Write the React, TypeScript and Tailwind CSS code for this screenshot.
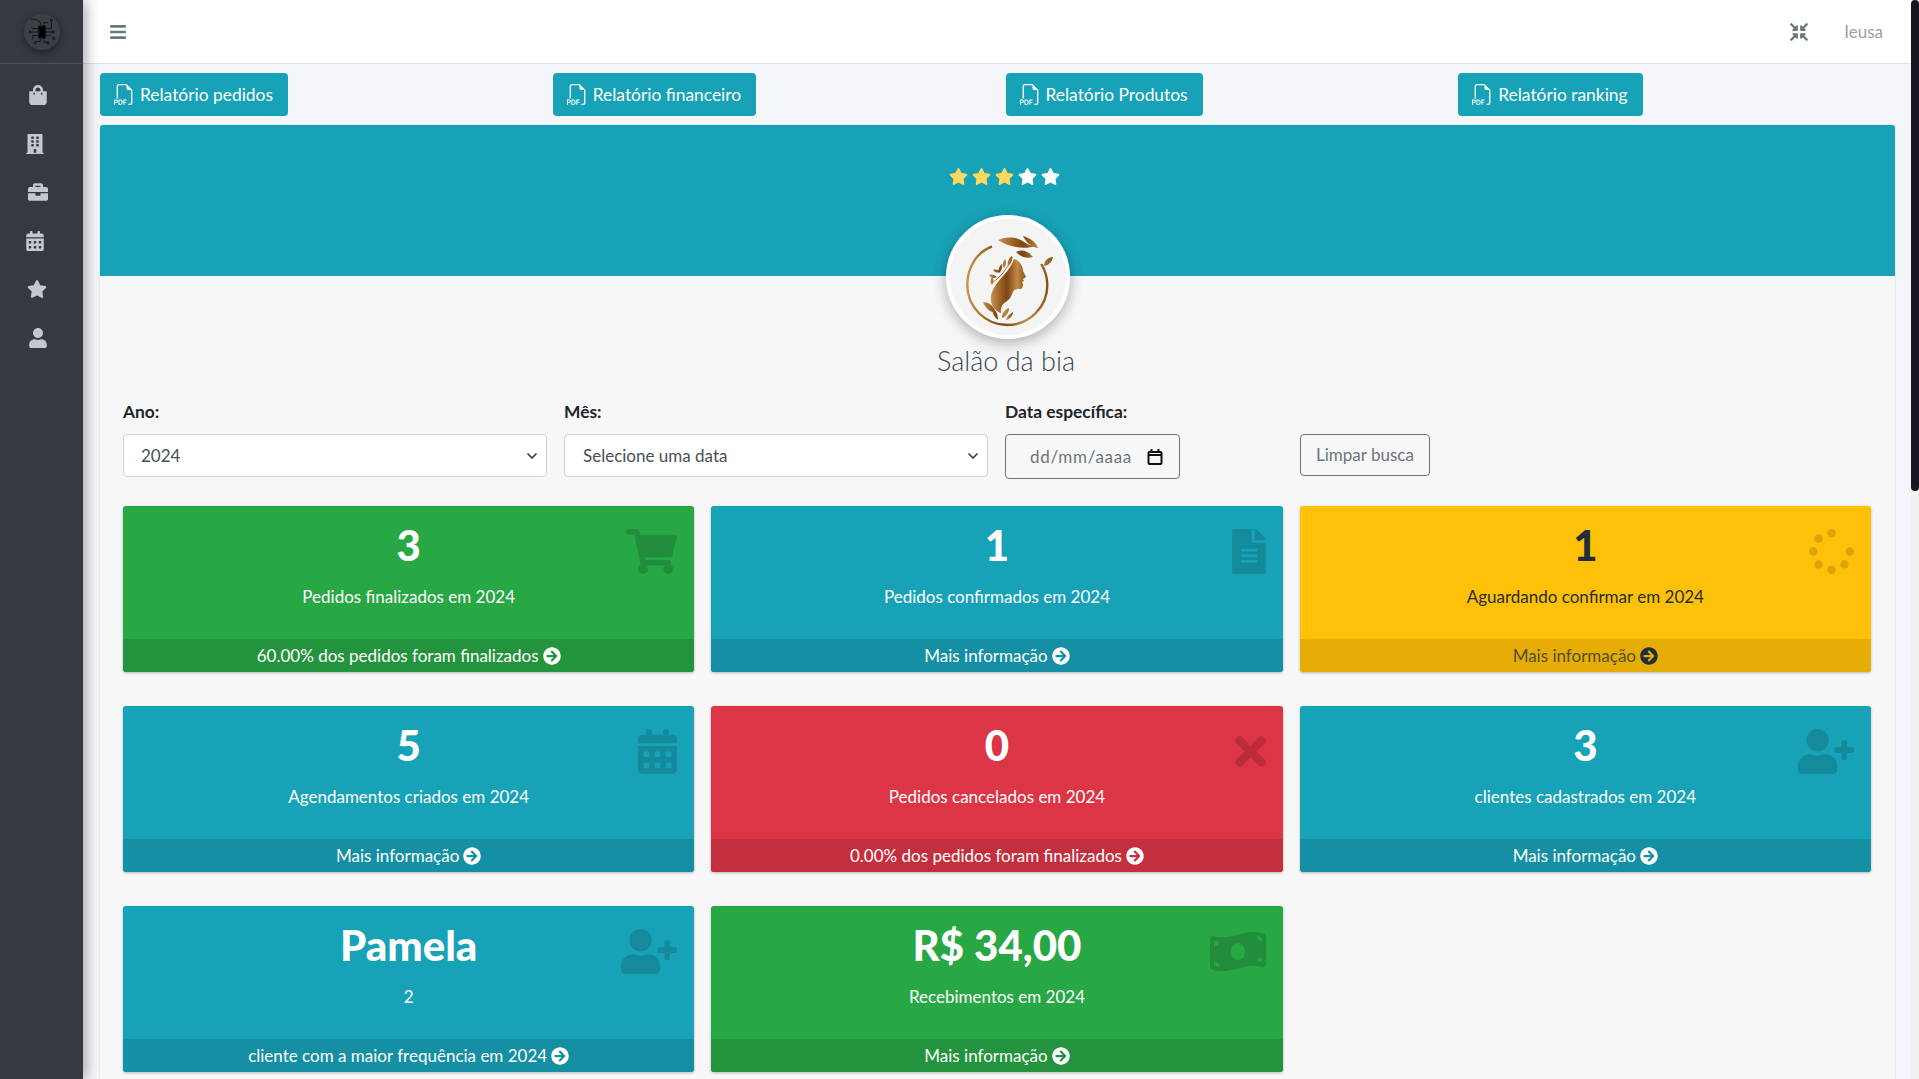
import React from "react";
import {
  FaShoppingBag,
  FaBuilding,
  FaBriefcase,
  FaCalendarAlt,
  FaStar,
  FaUser,
  FaBars,
  FaCompressArrowsAlt,
  FaShoppingCart,
  FaFileAlt,
  FaSpinner,
  FaTimes,
  FaUserPlus,
  FaMoneyBillWave,
  FaArrowCircleRight,
} from "react-icons/fa";
import { BsFiletypePdf } from "react-icons/bs";
import { ChevronDown } from "lucide-react";

const sideIcons = [
  { Icon: FaShoppingBag, cls: "ml-[-8px]" },
  { Icon: FaBuilding, cls: "ml-[-14px]" },
  { Icon: FaBriefcase, cls: "ml-[-7px]" },
  { Icon: FaCalendarAlt, cls: "ml-[-13px]" },
  { Icon: FaStar, cls: "ml-[-9px]" },
  { Icon: FaUser, cls: "ml-[-8px]" },
];

const reports = ["Relatório pedidos", "Relatório financeiro", "Relatório Produtos", "Relatório ranking"];

const teal = { body: "bg-[#17a2b8] text-white", foot: "bg-[#148fa3] text-white", text: "", icon: "text-[#148a9c]" };
const green = { body: "bg-[#28a745] text-white", foot: "bg-[#24933d] text-white", text: "", icon: "text-[#228e3b]" };
const red = { body: "bg-[#dc3545] text-white", foot: "bg-[#c32f3d] text-white", text: "", icon: "text-[#bb2d3b]" };
const yellow = { body: "bg-[#ffc107] text-[#1f2d3d]", foot: "bg-[#e5ad06] text-[#1f2d3d]", text: "opacity-75", icon: "text-[#d9a406]" };

const cards = [
  { value: "3", label: "Pedidos finalizados em 2024", foot: "60.00% dos pedidos foram finalizados", tone: green, Icon: FaShoppingCart, w: "w-[51px]" },
  { value: "1", label: "Pedidos confirmados em 2024", foot: "Mais informação", tone: teal, Icon: FaFileAlt, w: "w-[34px]" },
  { value: "1", label: "Aguardando confirmar em 2024", foot: "Mais informação", tone: yellow, Icon: FaSpinner, w: "w-[45px]" },
  { value: "5", label: "Agendamentos criados em 2024", foot: "Mais informação", tone: teal, Icon: FaCalendarAlt, w: "w-[39px]" },
  { value: "0", label: "Pedidos cancelados em 2024", foot: "0.00% dos pedidos foram finalizados", tone: red, Icon: FaTimes, w: "w-[31px]" },
  { value: "3", label: "clientes cadastrados em 2024", foot: "Mais informação", tone: teal, Icon: FaUserPlus, w: "w-[56px]" },
  { value: "Pamela", label: "2", foot: "cliente com a maior frequência em 2024", tone: teal, Icon: FaUserPlus, w: "w-[56px]" },
  { value: "R$ 34,00", label: "Recebimentos em 2024", foot: "Mais informação", tone: green, Icon: FaMoneyBillWave, w: "w-[56px]" },
];

const ChipLogo = () => (
  <svg viewBox="0 0 40 40" className="w-[34px] h-[34px]" fill="none" stroke="#111" strokeWidth="1">
    <rect x="16" y="13" width="8" height="14" fill="#000" />
    <path d="M16 16H9l-2-2M16 20H6M16 24H9v5M24 16h7V7M24 20h9M24 24h6l3 3M18 13V8l-6-3H7M22 13V9h5M18 27v4h-6M22 27v5h5" />
    <circle cx="6" cy="20" r="1.3" />
    <circle cx="33" cy="20" r="1.3" />
    <circle cx="31" cy="6" r="1.3" />
    <circle cx="12" cy="33" r="1.3" />
    <circle cx="27" cy="33" r="1.3" />
    <circle cx="34" cy="28" r="1.3" />
  </svg>
);

const SalonLogo = () => (
  <svg viewBox="4 4 116 116" className="w-[116px] h-[116px]" fill="none">
    <defs>
      <linearGradient id="gold" x1="0" y1="0" x2="1" y2="0">
        <stop offset="0" stopColor="#c8924a" />
        <stop offset="0.45" stopColor="#7d4411" />
        <stop offset="0.75" stopColor="#c08a45" />
        <stop offset="1" stopColor="#8a5218" />
      </linearGradient>
    </defs>
    {/* ring */}
    <path d="M46 31.5C31 37 21.3 52 21.3 70c0 22 18 40 40 40s40-18 40-40c0-8-2.500-15-6-21" stroke="url(#gold)" strokeWidth="2.4" />
    {/* head, neck and hair swoosh */}
    <path d="M68 44c5 1 9 7 9 12l3 6-3 2 1 2-2 1 1 2c0 3-1 5-3 5-3 0-6 0-7 3-2 4-2 6-6 9-5 3-7 7-6 12-5-2-9-6-10-12-1-9 4-16 12-25 6-6 9-12 11-17z" fill="url(#gold)" />
    {/* top leaves */}
    <path d="M52 25c10-4 20-3 26 2 5 3 8 4 12 4-12 4-28 1-38-6zM77 21c7 2 13 6 15 12-7-1-12-6-15-12zM70 37c6-3 12-1 17 5-6 2-13 0-17-5zM98 51c0-5 4-9 9-9-1 5-4 8-9 9z" fill="url(#gold)" />
    {/* sprig */}
    <path d="M47 67c7-4 15-14 19-25" stroke="url(#gold)" strokeWidth="1" />
    <path d="M66 41c1 4-1 8-4 10-1-4 1-8 4-10zM59 44c2 3 1 6-1 9-2-3-1-6 1-9zM56 49c1 3 0 6-3 9-1-3 0-7 3-9zM47 55c3-1 6 0 8 2-3 1-6 1-8-2zM43 60c3-1 6 0 8 2-3 2-6 1-8-2zM46 62c2 2 2 5 0 8-2-2-2-6 0-8z" fill="url(#gold)" />
    {/* bottom leaves */}
    <path d="M37 87c6 0 11 4 13 11-6-1-11-5-13-11zM46 93c4 2 6 6 6 12-4-3-6-7-6-12zM56 103c0-4 2-8 7-10 0 4-2 8-7 10zM60 105c1-3 3-6 7-8 0 4-3 7-7 8z" fill="url(#gold)" />
  </svg>
);

function StatCard({ card }: { card: (typeof cards)[number] }) {
  const { Icon, tone } = card;
  return (
    <div className={`relative h-[166px] rounded-[3px] overflow-hidden flex flex-col shadow-[0_1px_3px_rgba(0,0,0,0.25)] ${tone.body}`}>
      <div className="flex-1 flex flex-col items-center">
        <div className="h-[76px] pt-[9px] text-[42px] leading-[60px] font-black">{card.value}</div>
        <div className="mt-[3px] text-[17px] leading-[24px]">{card.label}</div>
      </div>
      <div className={`h-[33px] flex items-center justify-center gap-[4px] text-[17px] ${tone.foot}`}>
        <span className={tone.text}>{card.foot}</span>
        <FaArrowCircleRight className="w-[18px] h-[18px]" />
      </div>
      <Icon className={`absolute right-[17px] top-[23px] h-[45px] ${card.w} ${tone.icon}`} />
    </div>
  );
}

export default function App() {
  return (
    <div className="h-screen overflow-hidden flex bg-[#f4f6f9] text-[#212529] font-['Lato','Noto_Sans',sans-serif]">
      <aside className="w-[83px] shrink-0 bg-[#343a40] shadow-[4px_0_12px_rgba(0,0,0,0.3)] z-10">
        <div className="h-[64px] border-b border-[#4b545c] flex items-center justify-center">
          <div className="w-[36px] h-[36px] rounded-full bg-[#3a4046] shadow-[0_3px_8px_rgba(0,0,0,0.4)] flex items-center justify-center">
            <ChipLogo />
          </div>
        </div>
        <nav className="pt-[21px] flex flex-col items-center gap-[28.6px]">
          {sideIcons.map(({ Icon, cls }, i) => (
            <Icon key={i} className={`w-auto h-[20px] text-[#c2c7d0] ${cls}`} />
          ))}
        </nav>
      </aside>

      <div className="flex-1 min-w-0 flex flex-col pr-[8px]">
        <header className="-mr-[8px] pr-[8px] h-[64px] shrink-0 bg-white border-b border-[#dee2e6] flex items-center justify-between pl-[27px]">
          <FaBars className="w-[16px] h-[18px] text-[#6c757d]" />
          <div className="flex items-center gap-[36px] pr-[28px] text-[#9aa0a6] text-[17px]">
            <FaCompressArrowsAlt className="w-[18px] h-[18px] text-[#6c757d]" />
            <span>Ieusa</span>
          </div>
        </header>

        <main className="pl-[17px] flex-1">
          <div className="grid grid-cols-4 pt-[9px]">
            {reports.map((r) => (
              <div key={r}>
                <button className="inline-flex items-center gap-[5px] h-[43px] pl-[14px] pr-[15px] rounded-[4px] bg-[#17a2b8] text-white text-[17.4px]">
                  <BsFiletypePdf className="w-[21px] h-[21px]" />
                  <span className="pt-[1px]">{r}</span>
                </button>
              </div>
            ))}
          </div>

          <section className="mt-[9px] mr-[16px] pb-[40px] bg-[#f7f7f7] rounded-t-[3px] shadow-[0_0_2px_rgba(0,0,0,0.2)]">
            <div className="relative h-[151px] bg-[#17a2b8] rounded-t-[3px] flex justify-center pt-[42px]">
              <div className="flex gap-[4px] ml-[13px] h-[19px]">
                {[0, 1, 2, 3, 4].map((s) => (
                  <FaStar key={s} className={`w-[19px] h-[19px] ${s < 3 ? "text-[#ffd85c]" : "text-white"}`} />
                ))}
              </div>
              <div className="absolute left-1/2 top-[90px] -translate-x-1/2 ml-[10px] w-[124px] h-[124px] rounded-full border-[4px] border-white bg-[#f4f4f4] shadow-[0_4px_14px_rgba(0,0,0,0.3)] flex items-center justify-center">
                <SalonLogo />
              </div>
            </div>

            <div className="pt-[67px] pl-[17px] text-center text-[#3b4654] text-[27px] leading-[36px] font-light">Salão da bia</div>

            <div className="pl-[23px] pr-[24px] pt-[21px]">
              <div className="grid grid-cols-[424px_424px_175px_1fr] gap-x-[17px]">
                <div>
                  <div className="text-[17.4px] font-bold leading-[24px] mb-[10px]">Ano:</div>
                  <div className="h-[43px] flex items-center justify-between pl-[17px] pr-[6px] border border-[#ced4da] rounded-[4px] bg-white text-[#495057] text-[17px]">
                    <span>2024</span>
                    <ChevronDown className="w-[16px] h-[16px] text-[#343a40]" strokeWidth={2.5} />
                  </div>
                </div>
                <div>
                  <div className="text-[17.4px] font-bold leading-[24px] mb-[10px]">Mês:</div>
                  <div className="h-[43px] flex items-center justify-between pl-[18px] pr-[6px] border border-[#ced4da] rounded-[4px] bg-white text-[#495057] text-[17px]">
                    <span>Selecione uma data</span>
                    <ChevronDown className="w-[16px] h-[16px] text-[#343a40]" strokeWidth={2.5} />
                  </div>
                </div>
                <div>
                  <div className="text-[17.4px] font-bold leading-[24px] mb-[10px]">Data específica:</div>
                  <div className="h-[45px] flex items-center justify-between pl-[24px] pr-[16px] border border-[#6c757d] rounded-[4px] text-[#6c757d] text-[17px]">
                    <span className="tracking-[0.7px]">dd/mm/aaaa</span>
                    <svg viewBox="0 0 16 16" className="w-[16px] h-[16px]" fill="none" stroke="#111" strokeWidth="2">
                      <rect x="1.5" y="3" width="13" height="12" rx="1" />
                      <path d="M1 6h14M4.5 0v3M11.5 0v3" />
                    </svg>
                  </div>
                </div>
                <div className="pl-[103px] pt-[34px]">
                  <button className="w-[130px] h-[42px] border border-[#6c757d] rounded-[4px] text-[#6c757d] text-[17px]">Limpar busca</button>
                </div>
              </div>

              <div className="grid grid-cols-3 gap-x-[17px] gap-y-[34px] mt-[27px]">
                {cards.map((c, i) => (
                  <StatCard key={i} card={c} />
                ))}
              </div>
            </div>
          </section>
        </main>
      </div>

      <div className="absolute right-0 top-0 w-[8px] h-full bg-[#f1f1f1]">
        <div className="h-[491px] rounded-[4px] bg-[#16161f]" />
      </div>
    </div>
  );
}
